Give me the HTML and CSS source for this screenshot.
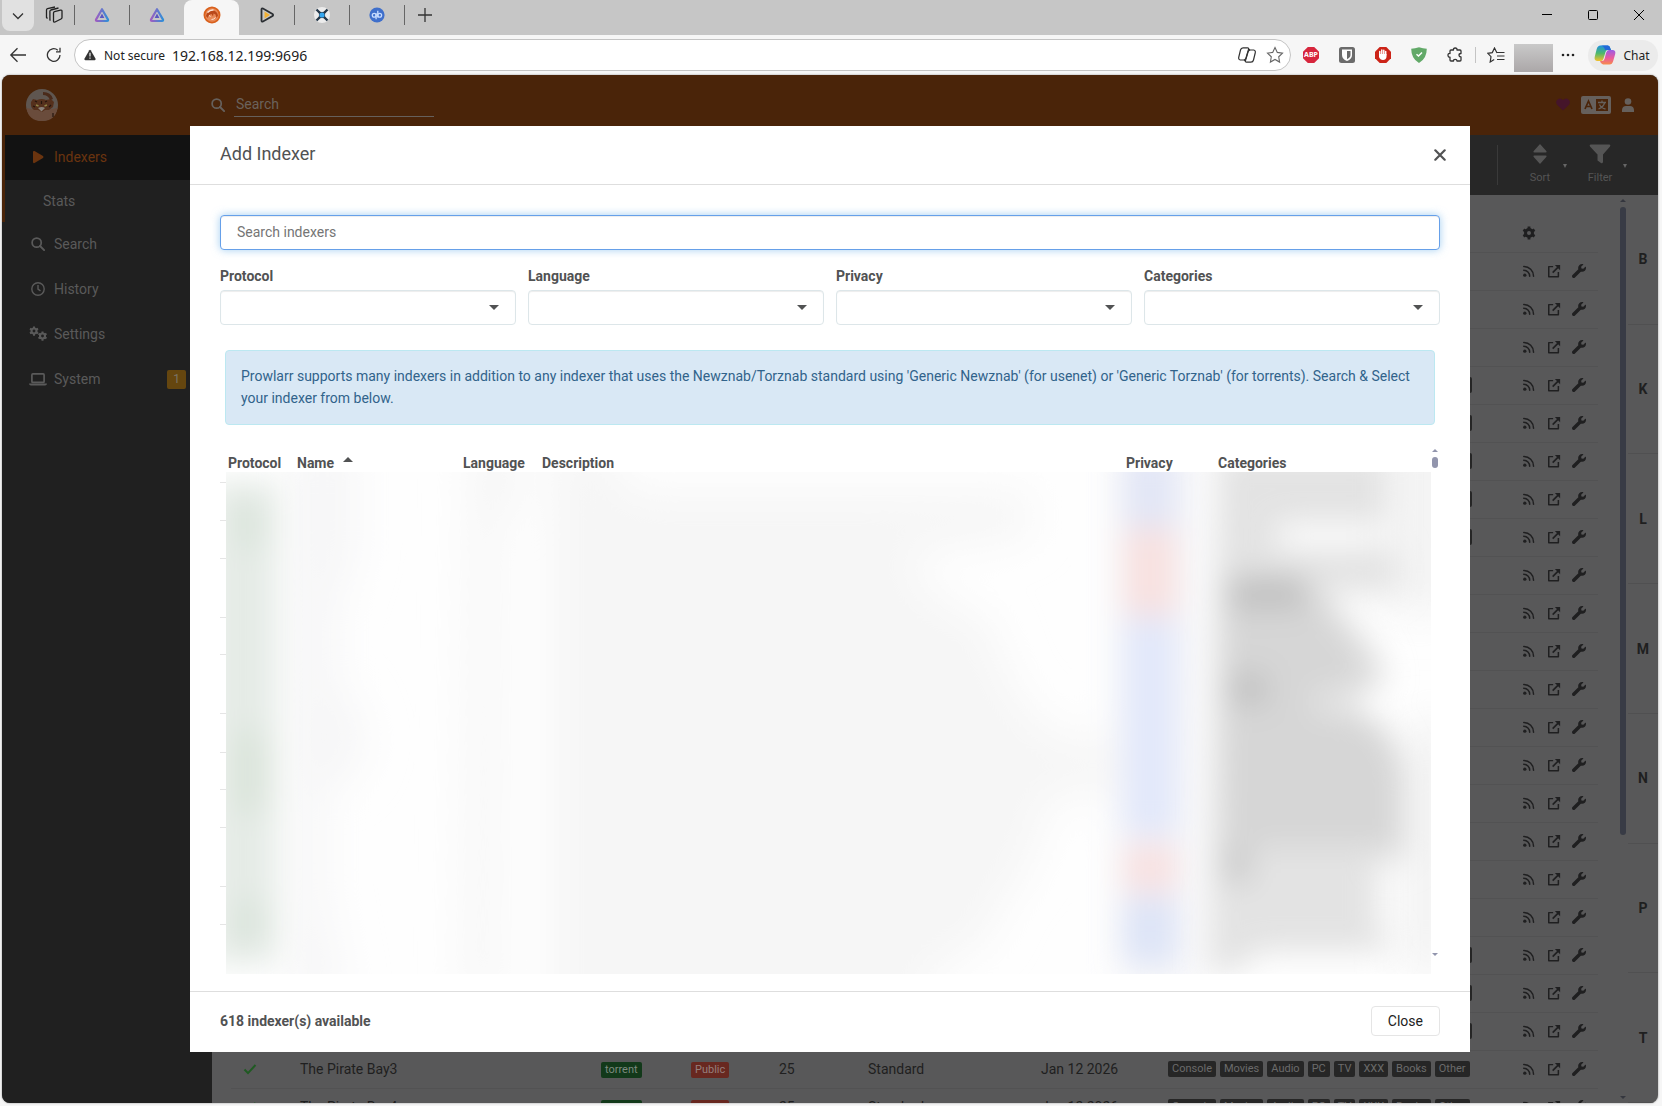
FILE: index.html
```html
<!DOCTYPE html>
<html lang="en">
<head>
    <meta charset="UTF-8">
    <meta name="viewport" content="width=device-width, initial-scale=1.0">
    <title>Prowlarr</title>
    <link rel="stylesheet" href="styles.css">
</head>
<body>
    <svg class="sprite" aria-hidden="true">
        <symbol id="i-search" viewBox="0 0 16 16"><circle cx="6.5" cy="6.5" r="5.2" fill="none" stroke="currentColor" stroke-width="2"/><path d="M10.3 10.3L15 15" stroke="currentColor" stroke-width="2.2" stroke-linecap="round"/></symbol>
        <symbol id="i-gear" viewBox="0 0 16 16"><circle cx="8" cy="8" r="4" fill="none" stroke="currentColor" stroke-width="3.4"/><path d="M8 .6v3M8 12.4v3M1.6 4.3l2.6 1.5M11.8 10.2l2.6 1.5M1.6 11.7l2.6-1.5M11.8 5.8l2.6-1.5" stroke="currentColor" stroke-width="3.2"/></symbol>
        <symbol id="i-rss" viewBox="0 0 16 16"><circle cx="3.2" cy="12.8" r="1.9" fill="currentColor"/><path d="M2 7.2a6.8 6.8 0 0 1 6.8 6.8M2 2.8A11.2 11.2 0 0 1 13.2 14" fill="none" stroke="currentColor" stroke-width="1.7" stroke-linecap="round"/></symbol>
        <symbol id="i-external" viewBox="0 0 16 16"><path d="M7 3H2v11.5h11V9" fill="none" stroke="currentColor" stroke-width="1.7" stroke-linejoin="round"/><path d="M6.5 9.8L13 3.2" stroke="currentColor" stroke-width="1.9"/><path d="M9 1h6v6z" fill="currentColor"/></symbol>
        <symbol id="i-wrench" viewBox="0 0 512 512"><path fill="currentColor" d="M507.73 109.1c-2.24-9.03-13.54-12.09-20.12-5.51l-74.36 74.36-67.88-11.31-11.31-67.88 74.36-74.36c6.62-6.62 3.43-17.9-5.66-20.16-47.38-11.74-99.55.91-136.58 37.93-39.64 39.64-50.55 97.1-34.05 147.2L18.74 402.76c-24.99 24.99-24.99 65.51 0 90.5 24.99 24.99 65.51 24.99 90.5 0l213.21-213.21c50.12 16.71 107.47 5.68 147.37-34.22 37.07-37.07 49.7-89.32 37.91-136.73z"/></symbol>
        <symbol id="i-arr" viewBox="0 0 16 16"><path d="M8 2.2L14 12.6Q14.4 14 13 14H3Q1.6 14 2 12.6z" fill="none" stroke="url(#arrGrad)" stroke-width="2.2" stroke-linejoin="round"/><path d="M8 6.6l2.4 4.4H5.6z" fill="#5b57c4"/></symbol>
        <symbol id="i-check" viewBox="0 0 14 14"><path d="M1.5 7.5l3.5 3.6L12.5 3" fill="none" stroke="currentColor" stroke-width="2"/></symbol>
        <linearGradient id="arrGrad"><stop offset="0" stop-color="#a05cc0"/><stop offset="1" stop-color="#2f8fd8"/></linearGradient>
    </svg>

    <header class="browser">
        <div class="tab-strip">
            <button class="tab-menu" aria-label="Tab actions"><svg width="14" height="14" viewBox="0 0 14 14"><path d="M2 4.5l5 5 5-5" fill="none" stroke="#333" stroke-width="1.3"/></svg></button>
            <button class="workspaces" aria-label="Workspaces"><svg width="18" height="18" viewBox="0 0 18 18" fill="none" stroke="#222" stroke-width="1.3" stroke-linejoin="round"><path d="M8.500 7q0-1 1-1.300l6-1.500q1.500-.3 1.500 1v6.300q0 1-1 1.500l-6 3q-1.500.5-1.500-1z"/><path d="M5.500 14.500l-.6-.5V5.2q0-.9.9-1.200L13.500 2M2.500 12.500l-1-1V4q0-1 1-1.300L10 1"/></svg></button>
            <button class="tab" aria-label="Tab 1"><svg width="16" height="16"><use href="#i-arr"/></svg></button>
            <button class="tab" aria-label="Tab 2"><svg width="16" height="16"><use href="#i-arr"/></svg></button>
            <button class="tab active" aria-label="Prowlarr"><svg width="18" height="18" viewBox="0 0 18 18"><circle cx="9" cy="9" r="7.600" fill="#e88a58" stroke="#d9601c" stroke-width="1.800"/><path d="M3 10q1-5 6-5.500 5 0 6 5l-1.500 2.500-1-3.500-2-1-.5 3-1.500-2.500L6 9l-1.500 3z" fill="#b9481a"/><path d="M4.500 6.500q3-3 6-2.500" fill="none" stroke="#fbe4d6" stroke-width="1.400"/><path d="M6 9.500l1.500 1M8.500 13.500q2.500 0 4-2" fill="none" stroke="#fbe4d6"/></svg></button>
            <button class="tab" aria-label="Tab 4"><svg width="16" height="16" viewBox="0 0 16 16"><path d="M2.500 2.500q0-1.500 1.500-1l9.500 5.400q1.200 1 0 2.200L4 14.500q-1.500.5-1.500-1z" fill="none" stroke="#2b2f33" stroke-width="1.800"/><path d="M5.500 4.500L11 8l-5.500 3.500z" fill="#f2b134"/></svg></button>
            <button class="tab" aria-label="Tab 5"><svg width="16" height="16" viewBox="0 0 16 16"><circle cx="8" cy="8" r="8" fill="#ececec"/><path d="M2.500 2.500l3 3M13.500 2.500l-3 3M2.500 13.500l3-3M13.500 13.500l-3-3" stroke="#25384a" stroke-width="2.400"/><path d="M4 4q4 2 8 0-2 4 0 8-4-2-8 0 2-4 0-8z" fill="#25384a"/><circle cx="8" cy="8" r="2.600" fill="#35a7f0"/></svg></button>
            <button class="tab" aria-label="Tab 6"><svg width="16" height="16" viewBox="0 0 16 16"><circle cx="8" cy="8" r="7.600" fill="#3f6fcb"/><g fill="none" stroke="#c8dcff" stroke-width="1.300"><circle cx="5.200" cy="8.300" r="1.900"/><circle cx="10.700" cy="8.300" r="1.900"/><path d="M7.100 6.200v6M8.800 3.800v6.600"/></g></svg></button>
            <button class="new-tab" aria-label="New tab"><svg width="16" height="16" viewBox="0 0 16 16"><path d="M8 1v14M1 8h14" stroke="#333" stroke-width="1.300"/></svg></button>
            <div class="window-controls">
                <button aria-label="Minimize"><svg width="12" height="12" viewBox="0 0 12 12"><path d="M1 5.500h10" stroke="#000"/></svg></button>
                <button aria-label="Maximize"><svg width="12" height="12" viewBox="0 0 12 12"><rect x="1.500" y="1.500" width="9" height="9" rx="1" fill="none" stroke="#000"/></svg></button>
                <button aria-label="Close window"><svg width="12" height="12" viewBox="0 0 12 12"><path d="M1 1l10 10M11 1L1 11" stroke="#000"/></svg></button>
            </div>
        </div>
        <div class="address-row">
            <button class="nav-btn" aria-label="Back"><svg width="18" height="16" viewBox="0 0 18 16"><path d="M17 8H2M8.500 1.200L1.800 8l6.700 6.800" fill="none" stroke="#333" stroke-width="1.300"/></svg></button>
            <button class="nav-btn" aria-label="Reload"><svg width="16" height="16" viewBox="0 0 16 16"><path d="M14 8A6.300 6.300 0 1 1 11.800 3.200M14 .8v4H10" fill="none" stroke="#333" stroke-width="1.300"/></svg></button>
            <div class="omnibox">
                <svg width="12" height="12" viewBox="0 0 14 13"><path d="M6.200 1q.8-1.200 1.600 0l5.700 10q.4 1.500-1 1.500h-11Q.1 12.500.5 11z" fill="#333"/><path d="M7 4v4.200M7 9.300v1.500" stroke="#fff" stroke-width="1.300"/></svg>
                <span class="not-secure">Not secure</span>
                <input class="url" type="text" aria-label="Address" value="192.168.12.199:9696">
                <button class="omni-btn" aria-label="Copilot"><svg width="18" height="16" viewBox="0 0 18 16" fill="none" stroke="#333" stroke-width="1.200" stroke-linejoin="round"><path d="M5 .8h4.500q1.500 0 1 1.700L8 11q-.6 2-2.500 2H2.300Q.2 12.500.8 10L2.500 3Q3 .8 5 .8z"/><path d="M13 15.200H8.500q-1.500 0-1-1.700L10 5q.6-2 2.500-2h3.200q2.100.5 1.500 3l-1.700 7q-.5 2.200-2.500 2.200z"/><path d="M10.500 2l1.500 1M7.500 14L6 13"/></svg></button>
                <button class="omni-btn" aria-label="Favorite"><svg width="18" height="18" viewBox="0 0 18 18"><path d="M9 1.500l2.300 4.900 5.200.7-3.800 3.700.9 5.300L9 13.500l-4.600 2.600.9-5.300L1.500 7.100l5.200-.7z" fill="none" stroke="#666" stroke-width="1.100"/></svg></button>
            </div>
            <button class="ext-btn abp" aria-label="Adblock Plus"><span>ABP</span></button>
            <button class="ext-btn" aria-label="Bitwarden"><svg width="16" height="16" viewBox="0 0 16 16"><rect width="16" height="16" rx="2.500" fill="#6b6b6b"/><path d="M3 2.500h10V8q0 4-5 6-5-2-5-6z" fill="#fff"/><path d="M8 4h3.500v4q0 2.500-3.500 4.200z" fill="#6b6b6b"/></svg></button>
            <button class="ext-btn" aria-label="AdBlock"><svg width="16" height="16" viewBox="0 0 16 16"><path d="M4.700 0h6.600L16 4.700v6.600L11.300 16H4.700L0 11.300V4.700z" fill="#cc2418"/><path d="M4.800 8V4.500M6.800 7.500V3M8.800 7.500V3.200M10.700 8V4.500" stroke="#fff" stroke-width="1.500" stroke-linecap="round"/><path d="M4 7h7.500v3q-.5 3-3.500 3-3 0-4-3z" fill="#fff"/></svg></button>
            <button class="ext-btn" aria-label="AdGuard"><svg width="16" height="16" viewBox="0 0 16 16"><path d="M8 .3q4 1.400 7.800 1.400 0 10-7.800 14.200Q.2 11.700.2 1.700 4 1.700 8 .3z" fill="#62a968"/><path d="M5.500 7.200L7.500 9l3.500-3.500" fill="none" stroke="#fff" stroke-width="1.500"/></svg></button>
            <button class="ext-btn" aria-label="Extensions"><svg width="16" height="16" viewBox="0 0 16 16"><path d="M4 3h2.500q-.3-2 1.700-2t1.800 2H13q1 0 1 1v2.500q-2 0-2 1.700t2 1.800v3q0 1-1 1h-3q0-1.700-1.800-1.700T6.500 14H4q-1 0-1-1v-2.800Q1 10.200 1 8.200T3 6.500V4q0-1 1-1z" fill="none" stroke="#333" stroke-width="1.300" stroke-linejoin="round"/></svg></button>
            <span class="divider"></span>
            <button class="ext-btn" aria-label="Favorites"><svg width="18" height="16" viewBox="0 0 18 16" fill="none" stroke="#333" stroke-width="1.200"><path d="M10 6L7.500 1 5.300 5.600l-4.500.7L4 9.600 3.200 15l4-2.400M10 5.500h7.500M10 9h7.500M10 12.500h7.500"/></svg></button>
            <span class="avatar"></span>
            <button class="more" aria-label="Settings and more"><svg width="14" height="4" viewBox="0 0 14 4" fill="#222"><circle cx="2" cy="2" r="1.300"/><circle cx="7" cy="2" r="1.300"/><circle cx="12" cy="2" r="1.300"/></svg></button>
            <button class="chat"><svg width="22" height="20" viewBox="0 0 22 20"><defs><linearGradient id="cA" x2="0" y2="1"><stop offset="0" stop-color="#1f8fe0"/><stop offset=".5" stop-color="#4cb96b"/><stop offset="1" stop-color="#f3c02b"/></linearGradient><linearGradient id="cB" x2="0" y2="1"><stop offset="0" stop-color="#9a5be6"/><stop offset=".55" stop-color="#ea5a9d"/><stop offset="1" stop-color="#f78b4a"/></linearGradient></defs><path d="M6.500.5H14q2 .3 2.400 3l.6 1.500h-3q-2 0-2.500 2L10 12q-1 4-3 4H3Q0 15.500.7 12l2-8Q3.600.5 6.500.5z" fill="url(#cA)"/><path d="M6.500.5H14q2 .3 2.400 3l.6 1.500h-6q-1-4.500-4.500-4.500z" fill="#2268d8"/><path d="M15.500 19.500H9q-2.500-.5-3-3.500H8q2 0 2.700-2.500L12 8q1-3 3-3h4q3 .5 2.200 4l-2 7q-1 3.500-3.700 3.500z" fill="url(#cB)"/></svg>Chat</button>
        </div>
    </header>

    <div class="page">
        <header class="page-header">
            <a class="logo" href="#" aria-label="Prowlarr"><svg width="34" height="34" viewBox="0 0 34 34"><circle cx="17" cy="17" r="16" fill="#5f5650"/><path d="M1.500 20q15 4 31 0-2 13-15.500 13T1.500 20z" fill="#6a4c3c"/><path d="M6 14l2-3 4 1q5-2 9 0l5-1 3 3-1 5-4 3-4 0-3 2-4-2-4 0q-4-3-3-8z" fill="#55301c"/><path d="M18 4q8 0 10 7l-3 1q-2-5-7-5z" fill="#4a2a1a"/><path d="M11 17l2.500 1M22 17l-2.500 1" stroke="#8f8345" stroke-width="1.400"/><path d="M13 20q4-2 7 0l-3.500 3.500z" fill="#8a817a"/><path d="M10 13l2 1M22 13l-2 1M16.500 13v3M28 25v4M8 18l2 1M26 17l-2 2" stroke="#24150d" stroke-width="1.200"/></svg></a>
            <div class="header-search">
                <svg width="14" height="14"><use href="#i-search"/></svg>
                <input type="text" placeholder="Search" aria-label="Search">
            </div>
            <div class="header-actions">
                <a href="#" class="heart" aria-label="Donate"><svg width="14" height="13" viewBox="0 0 14 13"><path d="M7 12.500L1 6.800Q-.6 4.500.8 2.200 3-.8 6 1.200L7 2.200l1-1q3-2 5.200 1Q14.600 4.500 13 6.800z" fill="currentColor"/></svg></a>
                <a href="#" aria-label="Translate"><svg width="30" height="18" viewBox="0 0 30 18"><rect width="30" height="18" rx="2" fill="#66605c"/><rect x="15" y="3" width="12" height="12" fill="#4a2409"/><path d="M4 13L7.500 5l3.500 8M5.200 10.500h4.600" fill="none" stroke="#4a2409" stroke-width="1.700"/><path d="M17 6.500h8M21 4.500v2M23.500 7q-1 4-6 6M18.500 8.500q2 4 6 4.500" fill="none" stroke="#66605c" stroke-width="1.300"/></svg></a>
                <a href="#" aria-label="Account"><svg width="12" height="14" viewBox="0 0 12 14" fill="#66605c"><circle cx="6" cy="3.500" r="3.300"/><path d="M0 14v-2q.3-4 4-4h4q3.700 0 4 4v2z"/></svg></a>
            </div>
        </header>

        <div class="page-main">
            <nav class="sidebar">
                <div class="nav-group">
                    <a class="nav-item current" href="#"><svg width="14" height="14" viewBox="0 0 14 14"><path d="M2 2q0-1.500 1.500-1l8.500 5q1 1 0 2l-8.500 5Q2 13.500 2 12z" fill="currentColor"/></svg>Indexers</a>
                    <a class="nav-item child" href="#">Stats</a>
                </div>
                <a class="nav-item" href="#"><svg width="14" height="14"><use href="#i-search"/></svg>Search</a>
                <a class="nav-item" href="#"><svg width="14" height="14" viewBox="0 0 14 14" fill="none" stroke="currentColor" stroke-width="1.400"><circle cx="7" cy="7" r="6.200"/><path d="M7 3v4.200l2.500 1.600"/></svg>History</a>
                <a class="nav-item" href="#"><svg class="wide" width="18" height="16" viewBox="0 0 18 16"><use href="#i-gear" width="10" height="10"/><use href="#i-gear" x="8.500" y="5" width="10" height="10"/></svg>Settings</a>
                <a class="nav-item" href="#"><svg class="wide" width="18" height="14" viewBox="0 0 18 14"><rect x="2.900" y="1.900" width="12.200" height="8.500" rx="1" fill="none" stroke="currentColor" stroke-width="1.700"/><path d="M0 11.500h18q0 2-2 2H2q-2 0-2-2z" fill="currentColor"/></svg>System<span class="nav-badge">1</span></a>
            </nav>

            <main class="content">
                <div class="toolbar">
                    <button class="tool"><svg width="14" height="20" viewBox="0 0 14 20" fill="currentColor"><path d="M7 0l6.500 7.200q.5 1.300-1 1.300h-11Q0 8.500.5 7.200zM7 20l6.500-7.200q.5-1.300-1-1.300h-11q-1.500 0-1 1.300z"/></svg>Sort<span class="tool-caret"></span></button>
                    <button class="tool"><svg width="22" height="20" viewBox="0 0 22 20" fill="currentColor"><path d="M1.500.5h19q1.500.5.5 2L14 10.500V18q-.5 2-2 1L8.500 16.500V10.500L1 2.500Q0 1 1.500.5z"/></svg>Filter<span class="tool-caret"></span></button>
                </div>
                <div class="content-body">
                    <div class="index-wrap">
                        <table class="index-table">
                            <colgroup><col class="c-status"><col class="c-name"><col class="c-protocol"><col class="c-privacy"><col class="c-priority"><col class="c-profile"><col class="c-added"><col><col class="c-actions"></colgroup>
                            <thead>
                                <tr><td colspan="8"></td><td><button class="icon-btn" aria-label="Table options"><svg width="14" height="14"><use href="#i-gear"/></svg></button></td></tr>
                            </thead>
                            <tbody id="indexRows"></tbody>
                        </table>
                    </div>
                    <div class="scroll-track"><span class="arrow-up"></span><span class="thumb"></span><span class="arrow-down"></span></div>
                    <div class="jump-bar">
                        <button>B</button><button>K</button><button>L</button><button>M</button><button>N</button><button>P</button><button>T</button>
                    </div>
                </div>
            </main>
        </div>

        <div class="backdrop">
            <section class="modal" role="dialog" aria-labelledby="modalTitle">
                <header class="modal-header">
                    <h1 id="modalTitle">Add Indexer</h1>
                    <button class="modal-x" aria-label="Close dialog"><svg width="12" height="12" viewBox="0 0 12 12"><path d="M1.300 1.300l9.400 9.400M10.700 1.300l-9.400 9.400" stroke="#515253" stroke-width="2.200" stroke-linecap="round"/></svg></button>
                </header>
                <div class="modal-body">
                    <input class="indexer-search" type="text" placeholder="Search indexers" aria-label="Search indexers">
                    <div class="filters">
                        <div class="filter"><label for="protocol">Protocol</label><div class="select-wrap"><select id="protocol"></select></div></div>
                        <div class="filter"><label for="language">Language</label><div class="select-wrap"><select id="language"></select></div></div>
                        <div class="filter"><label for="privacy">Privacy</label><div class="select-wrap"><select id="privacy"></select></div></div>
                        <div class="filter"><label for="categories">Categories</label><div class="select-wrap"><select id="categories"></select></div></div>
                    </div>
                    <div class="alert">Prowlarr supports many indexers in addition to any indexer that uses the Newznab/Torznab standard using 'Generic Newznab' (for usenet) or 'Generic Torznab' (for torrents). Search &amp; Select your indexer from below.</div>
                    <div class="results">
                        <table class="results-table">
                            <colgroup><col class="r-protocol"><col class="r-name"><col class="r-language"><col><col class="r-privacy"><col class="r-categories"></colgroup>
                            <thead>
                                <tr><th>Protocol</th><th>Name<span class="sort-up"></span></th><th>Language</th><th>Description</th><th>Privacy</th><th>Categories</th></tr>
                            </thead>
                            <tbody>
                                <tr><td colspan="6">
                                    <svg class="redacted" viewBox="0 0 1211 502" preserveAspectRatio="none" aria-hidden="true">
                                        <defs>
                                            <filter id="soft" filterUnits="userSpaceOnUse" x="-60" y="-60" width="1400" height="640"><feGaussianBlur stdDeviation="15"/></filter>
                                            <filter id="softer" filterUnits="userSpaceOnUse" x="-60" y="-60" width="1400" height="640"><feGaussianBlur stdDeviation="22"/></filter>
                                            <clipPath id="area"><rect x="6" width="1205" height="502"/></clipPath>
                                        </defs>
                                        <path d="M0 10.500h6M0 48.500h6M0 86.500h6M0 145.500h6M0 182.500h6M0 241.500h6M0 280.500h6M0 317.500h6M0 355.500h6M0 414.500h6M0 452.500h6" stroke="#e5e5e5"/>
                                        <g clip-path="url(#area)">
                                            <rect x="6" width="1205" height="502" fill="#fefefe"/>
                                            <g filter="url(#softer)">
                                                <path d="M70-30h65v110l-20 60v70q30 30 30 60t-40 50v100l20 110H70z" fill="#f6f6f7"/>
                                                <path d="M250-30h50v50l-20 40v470h-35z" fill="#f6f6f6"/>
                                                <path d="M330-30h60l20 50h400v45l-120 15 20 40 60 30 20 60 40 50 120 20v30l-120 15-20 70-30 40-10 30-60 40-20 60H330z" fill="#f6f6f6"/>
                                                <rect x="900" y="-40" width="80" height="560" fill="#f5f5f8"/>
                                                <rect x="1160" y="-40" width="80" height="180" fill="#f3f3f3"/>
                                                <rect x="1180" y="250" width="60" height="250" fill="#f3f3f3"/>
                                            </g>
                                            <g filter="url(#soft)">
                                                <rect x="-10" y="10" width="66" height="482" fill="#e5ebe6"/>
                                                <rect x="14" y="30" width="34" height="46" fill="#dce5dd"/>
                                                <rect x="14" y="260" width="34" height="80" fill="#dae4da"/>
                                                <rect x="14" y="430" width="34" height="40" fill="#dae4dc"/>
                                                <rect x="904" y="-20" width="52" height="76" fill="#e2e6f6"/>
                                                <rect x="904" y="56" width="52" height="88" fill="#f8e1e0"/>
                                                <rect x="904" y="144" width="52" height="220" fill="#e2e8fa"/>
                                                <rect x="904" y="372" width="52" height="48" fill="#f8e1e1"/>
                                                <rect x="904" y="424" width="52" height="68" fill="#dde4f7"/>
                                            </g>
                                            <g filter="url(#soft)">
                                                <path d="M998-20h170v72h-110v24h120v44h-70l50 60 10 30-40 20 40 30 20 40v90h-30v70h10v20h-130l-20 20h-30z" fill="#e3e3e3"/>
                                                <path d="M1004 110h80l60 80v25h-50v30h60l24 40v90h-174z" fill="#d6d6d6"/>
                                                <rect x="1010" y="104" width="76" height="32" fill="#c0c0c0"/>
                                                <rect x="1010" y="202" width="36" height="30" fill="#c0c0c0"/>
                                                <rect x="1004" y="376" width="26" height="34" fill="#c8c8c8"/>
                                            </g>
                                        </g>
                                    </svg>
                                </td></tr>
                            </tbody>
                        </table>
                        <div class="scroll-track small"><span class="arrow-up"></span><span class="thumb"></span><span class="arrow-down"></span></div>
                    </div>
                </div>
                <footer class="modal-footer">
                    <strong>618 indexer(s) available</strong>
                    <button class="close-btn">Close</button>
                </footer>
            </section>
        </div>
    </div>

    <script>
        const tags = ['Console', 'Movies', 'Audio', 'PC', 'TV', 'XXX', 'Books', 'Other'];
        const longRows = [3, 4, 5, 6, 7, 18, 19, 20];
        const names = { 21: 'The Pirate Bay3', 22: 'The Pirate Bay4' };
        const icon = (name, label) => `<button class="icon-btn" aria-label="${label}"><svg width="14" height="14"><use href="#i-${name}"/></svg></button>`;
        let html = '';

        for (let i = 0; i < 23; i++) {
            const named = names[i];
            let tagHtml = '';
            if (named) {
                tagHtml = tags.map(t => `<span class="tag">${t}</span>`).join('');
            } else if (longRows.includes(i)) {
                tagHtml = '<span class="tag-strip"></span>';
            }
            html += '<tr>'
                + `<td>${named ? '<svg class="ok" width="14" height="14"><use href="#i-check"/></svg>' : ''}</td>`
                + `<td>${named || ''}</td>`
                + `<td>${named ? '<span class="tag green">torrent</span>' : ''}</td>`
                + `<td>${named ? '<span class="tag red">Public</span>' : ''}</td>`
                + `<td>${named ? '25' : ''}</td>`
                + `<td>${named ? 'Standard' : ''}</td>`
                + `<td>${named ? 'Jan 12 2026' : ''}</td>`
                + `<td><div class="tags">${tagHtml}</div></td>`
                + `<td><div class="row-actions">${icon('rss', 'RSS')}${icon('external', 'Open site')}${icon('wrench', 'Edit')}</div></td>`
                + '</tr>';
        }
        document.getElementById('indexRows').innerHTML = html;
    </script>
</body>
</html>
```
FILE: styles.css
```css
* {
    box-sizing: border-box;
}
body {
    margin: 0;
    height: 100vh;
    display: flex;
    flex-direction: column;
    overflow: hidden;
    background: #f6f6f6;
    font-family: Roboto, "Open Sans", sans-serif;
    font-size: 14px;
    color: #515253;
}
button {
    font: inherit;
    color: inherit;
    background: none;
    border: none;
    padding: 0;
    display: flex;
    align-items: center;
    justify-content: center;
    cursor: pointer;
}
a {
    color: inherit;
    text-decoration: none;
}
svg {
    display: block;
    flex: none;
}
.sprite {
    position: absolute;
    width: 0;
    height: 0;
}

/* browser window */
.browser {
    flex: none;
    font-family: "Noto Sans", sans-serif;
    color: #222;
}
.tab-strip {
    display: flex;
    height: 35px;
    background: #c6c6c6;
    padding-left: 2px;
}
.tab-menu {
    width: 32px;
    height: 31px;
    border-radius: 0 0 8px 8px;
    background: #e1e1e1;
}
.workspaces {
    width: 40px;
    height: 30px;
}
.tab {
    position: relative;
    width: 55px;
    height: 30px;
}
.tab::before,
.new-tab::before {
    content: "";
    position: absolute;
    left: 0;
    top: 5px;
    width: 1px;
    height: 20px;
    background: #666;
}
.tab.active {
    height: 35px;
    padding-bottom: 5px;
    background: #f6f6f6;
    border-radius: 8px 8px 0 0;
}
.tab.active::before,
.tab.active + .tab::before {
    display: none;
}
.new-tab {
    position: relative;
    width: 42px;
    height: 30px;
}
.new-tab svg {
    margin-left: 16px;
    margin-right: 16px;
}
.window-controls {
    display: flex;
    margin-left: auto;
}
.window-controls button {
    width: 46px;
    height: 30px;
}
.address-row {
    display: flex;
    align-items: center;
    height: 40px;
    padding-right: 4px;
}
.nav-btn {
    width: 36px;
    height: 32px;
}
.omnibox {
    flex: 1;
    display: flex;
    align-items: center;
    height: 32px;
    margin-left: 2px;
    padding: 0 1px 0 9px;
    background: #fff;
    border: 1px solid #c4c4c4;
    border-radius: 16px;
}
.not-secure {
    margin-left: 8px;
    font-size: 12px;
}
.url {
    flex: 1;
    margin-left: 7px;
    border: none;
    outline: none;
    padding: 0;
    font: 14px "Noto Sans", sans-serif;
    color: #222;
    background: none;
}
.omni-btn {
    width: 28px;
    height: 28px;
}
.ext-btn {
    width: 36px;
    height: 32px;
}
.omnibox + .ext-btn {
    margin-left: 2px;
}
.abp span {
    width: 16px;
    height: 16px;
    background: #d7263d;
    clip-path: polygon(30% 0, 70% 0, 100% 30%, 100% 70%, 70% 100%, 30% 100%, 0 70%, 0 30%);
    color: #fff;
    font: bold 7px/16px "Noto Sans", sans-serif;
    text-align: center;
}
.divider {
    width: 1px;
    height: 16px;
    margin: 0 2px;
    background: #c4c4c4;
}
.avatar {
    width: 39px;
    height: 28px;
    margin-top: 6px;
    background: linear-gradient(#c9c9c9, #aba7a8);
}
.more {
    width: 30px;
    height: 32px;
}
.chat {
    gap: 7px;
    width: 70px;
    height: 31px;
    margin-left: 5px;
    padding-right: 2px;
    border-radius: 16px;
    background: #ebebeb;
    font-size: 12px;
}

/* page */
.page {
    flex: 1;
    min-height: 0;
    position: relative;
    display: flex;
    flex-direction: column;
    margin: 0 4px 3px 2px;
    border-radius: 8px;
    overflow: hidden;
    background: #585859;
    box-shadow: 0 0 2px #888;
}
.page-header {
    flex: none;
    display: flex;
    align-items: center;
    height: 60px;
    padding-bottom: 1px;
    background: #4a2409;
    color: #66605c;
}
.logo {
    width: 186px;
    padding-left: 23px;
}
.header-search {
    display: flex;
    align-items: center;
    gap: 9px;
    padding-left: 23px;
}
.header-search input {
    width: 200px;
    height: 24px;
    padding: 0 2px;
    border: none;
    border-bottom: 1px solid #66605c;
    background: none;
    font: 14px Roboto, sans-serif;
    color: inherit;
    outline: none;
}
.header-search input::placeholder {
    color: #6b625c;
}
.header-actions {
    display: flex;
    align-items: center;
    gap: 11px;
    margin-left: auto;
    padding-right: 24px;
}
.heart {
    color: #45152a;
}
.page-main {
    flex: 1;
    min-height: 0;
    display: flex;
}
.sidebar {
    width: 210px;
    background: #202020;
    color: #5a5a5a;
}
.nav-group {
    border-left: 3px solid #4a2409;
}
.nav-item {
    display: flex;
    align-items: center;
    gap: 9px;
    height: 45px;
    padding: 0 26px 1px 29px;
}
.nav-item .wide {
    margin: 0 -2px;
}
.nav-group .nav-item {
    padding-left: 26px;
}
.nav-item.current {
    background: #121212;
    color: #6a340f;
}
.nav-group .nav-item.child {
    height: 42px;
    padding-left: 38px;
}
.nav-badge {
    width: 19px;
    height: 19px;
    margin-left: auto;
    border-radius: 2px;
    background: #65460f;
    color: #7b7468;
    font-size: 12px;
    line-height: 19px;
    text-align: center;
}
.content {
    flex: 1;
    min-width: 0;
    display: flex;
    flex-direction: column;
}
.toolbar {
    flex: none;
    display: flex;
    justify-content: flex-end;
    height: 60px;
    padding-right: 28px;
    background: #272727;
    color: #555;
}
.tool {
    position: relative;
    flex-direction: column;
    gap: 8px;
    width: 60px;
    padding-bottom: 2px;
    font-size: 11px;
    line-height: 12px;
}
.tool:first-child::before {
    content: "";
    position: absolute;
    left: -13px;
    top: 10px;
    width: 1px;
    height: 40px;
    background: #3a3a3a;
}
.tool-caret {
    position: absolute;
    right: 3px;
    top: 29px;
    border: 2px solid transparent;
    border-top: 4px solid #666;
}
.content-body {
    flex: 1;
    min-height: 0;
    display: flex;
}
.index-wrap {
    flex: 1;
    overflow: hidden;
    padding: 20px 20px 0 19px;
}
.index-table {
    width: 100%;
    table-layout: fixed;
    border-collapse: collapse;
    color: #1f1f20;
}
.index-table td {
    height: 38px;
    padding: 0 10px 1px;
    border-top: 1px solid #525253;
    white-space: nowrap;
}
.index-table thead td {
    height: 37px;
    border: none;
}
.index-table .c-status { width: 59px; }
.index-table .c-name { width: 301px; }
.index-table .c-protocol { width: 90px; }
.index-table .c-privacy { width: 88px; }
.index-table .c-priority { width: 89px; }
.index-table .c-profile { width: 173px; }
.index-table .c-added { width: 127px; }
.index-table .c-actions { width: 86px; }
.ok {
    margin-left: 2px;
    color: #1f5a22;
}
.tags {
    display: flex;
    gap: 4px;
}
.tag {
    display: inline-block;
    padding: 1px 4px;
    border-radius: 2px;
    background: #262626;
    color: #6b6b6b;
    font-size: 11px;
    line-height: 14px;
}
.tag.green {
    background: #12391a;
    color: #7d8a7f;
}
.tag.red {
    background: #682820;
    color: #957f7c;
}
.tag-strip {
    width: 304px;
    height: 16px;
    border-radius: 2px;
    background: #262626;
}
.row-actions {
    display: flex;
    gap: 11px;
}
.scroll-track {
    display: flex;
    flex-direction: column;
    align-items: center;
    width: 10px;
    padding: 4px 0;
}
.arrow-up {
    border: 3px solid transparent;
    border-top: none;
    border-bottom: 3px solid #34363e;
}
.arrow-down {
    margin-top: auto;
    border: 3px solid transparent;
    border-bottom: none;
    border-top: 3px solid #34363e;
}
.thumb {
    width: 6px;
    height: 628px;
    margin-top: 5px;
    border-radius: 3px;
    background: #383b45;
}
.jump-bar {
    display: flex;
    flex-direction: column;
    width: 30px;
}
.jump-bar button {
    flex: 1;
    border-bottom: 1px solid #505051;
    color: #1f1f20;
    font-weight: bold;
}

/* modal */
.backdrop {
    position: absolute;
    inset: 0;
    display: flex;
    align-items: center;
    justify-content: center;
}
.modal {
    display: flex;
    flex-direction: column;
    width: 1280px;
    max-width: 90%;
    height: 90%;
    background: #fff;
}
.modal-header {
    flex: none;
    display: flex;
    align-items: center;
    justify-content: space-between;
    height: 59px;
    padding: 0 23px 4px 30px;
    border-bottom: 1px solid #dedede;
}
.modal-header h1 {
    margin: 0;
    font-size: 18px;
    font-weight: normal;
}
.modal-x {
    width: 14px;
    height: 14px;
    margin: 4px 0 0;
}
.modal-body {
    flex: 1;
    min-height: 0;
    display: flex;
    flex-direction: column;
    padding: 30px 30px 0;
    overflow: hidden;
}
.indexer-search {
    flex: none;
    width: 100%;
    height: 35px;
    padding: 0 16px 1px;
    border: 1px solid #66a0e9;
    border-radius: 4px;
    font: 14px Roboto, sans-serif;
    color: #515253;
    outline: none;
    box-shadow: inset 0 1px 1px rgba(0, 0, 0, 0.075), 0 0 8px rgba(102, 175, 233, 0.6);
}
.indexer-search::placeholder {
    color: #757575;
}
.filters {
    display: flex;
    gap: 12px;
    margin-top: 16px;
}
.filter {
    flex: 1;
}
.filter label {
    display: block;
    margin-bottom: 4px;
    font-weight: bold;
    line-height: 20px;
}
.select-wrap {
    position: relative;
}
.select-wrap::after {
    content: "";
    position: absolute;
    right: 17px;
    top: 15px;
    border: 5px solid transparent;
    border-top-color: #515253;
    border-bottom: none;
    pointer-events: none;
}
.select-wrap select {
    display: block;
    width: 100%;
    height: 35px;
    padding: 0 16px;
    appearance: none;
    border: 1px solid #dde6e9;
    border-radius: 4px;
    background: #fff;
    box-shadow: inset 0 1px 1px rgba(0, 0, 0, 0.075);
    font: inherit;
}
.alert {
    flex: none;
    margin: 25px 5px 0;
    padding: 14px 15px;
    min-height: 75px;
    border: 1px solid #bce8f1;
    border-radius: 4px;
    background: #d9e8f5;
    color: #31638b;
    line-height: 22px;
}
.results {
    flex: 1;
    min-height: 0;
    display: flex;
    margin-top: 20px;
}
.results-table {
    flex: 1;
    width: 100%;
    height: 100%;
    table-layout: fixed;
    border-collapse: collapse;
}
.results-table th {
    height: 27px;
    padding: 8px 0 0 8px;
    text-align: left;
    white-space: nowrap;
    line-height: 18px;
}
.results-table td {
    padding: 0;
    vertical-align: top;
}
.results-table .r-protocol { width: 69px; }
.results-table .r-name { width: 166px; }
.results-table .r-language { width: 79px; }
.results-table .r-privacy { width: 92px; }
.results-table .r-categories { width: 221px; }
.sort-up {
    display: inline-block;
    margin-left: 9px;
    vertical-align: 6px;
    border: 5px solid transparent;
    border-top: none;
    border-bottom-color: #515253;
}
.redacted {
    width: 100%;
    height: 502px;
}
.scroll-track.small {
    width: 9px;
    padding: 4px 2px 35px 0;
}
.small .arrow-up {
    border-bottom-color: #9295ad;
}
.small .arrow-down {
    border-top-color: #9295ad;
}
.small .thumb {
    height: 11px;
    margin-top: 5px;
    background: #9295ad;
}
.modal-footer {
    flex: none;
    display: flex;
    align-items: center;
    justify-content: space-between;
    height: 61px;
    padding: 0 30px 2px;
    border-top: 1px solid #dedede;
}
.close-btn {
    height: 30px;
    padding: 0 16px;
    border: 1px solid #e5e5e5;
    border-radius: 4px;
    color: #222;
}
```
